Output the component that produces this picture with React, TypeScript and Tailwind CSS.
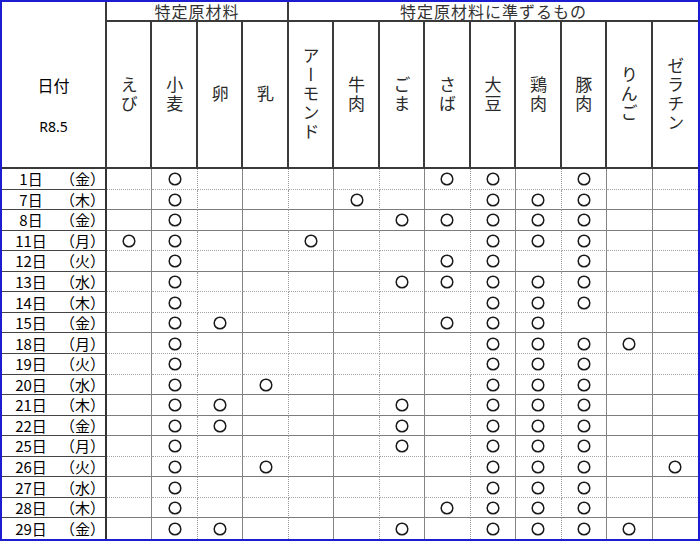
import React from 'react';

const allergens = ['えび', '小麦', '卵', '乳', 'アーモンド', '牛肉', 'ごま', 'さば', '大豆', '鶏肉', '豚肉', 'りんご', 'ゼラチン'];

interface Row {
    day: string;
    week: string;
    marks: string[];
}

const rows: Row[] = [
    { day: '1日', week: '金', marks: ['小麦', 'さば', '大豆', '豚肉'] },
    { day: '7日', week: '木', marks: ['小麦', '牛肉', '大豆', '鶏肉', '豚肉'] },
    { day: '8日', week: '金', marks: ['小麦', 'ごま', 'さば', '大豆', '鶏肉', '豚肉'] },
    { day: '11日', week: '月', marks: ['えび', '小麦', 'アーモンド', '大豆', '鶏肉', '豚肉'] },
    { day: '12日', week: '火', marks: ['小麦', 'さば', '大豆', '豚肉'] },
    { day: '13日', week: '水', marks: ['小麦', 'ごま', 'さば', '大豆', '鶏肉', '豚肉'] },
    { day: '14日', week: '木', marks: ['小麦', '大豆', '鶏肉', '豚肉'] },
    { day: '15日', week: '金', marks: ['小麦', '卵', 'さば', '大豆', '鶏肉'] },
    { day: '18日', week: '月', marks: ['小麦', '大豆', '鶏肉', '豚肉', 'りんご'] },
    { day: '19日', week: '火', marks: ['小麦', '大豆', '鶏肉', '豚肉'] },
    { day: '20日', week: '水', marks: ['小麦', '乳', '大豆', '鶏肉', '豚肉'] },
    { day: '21日', week: '木', marks: ['小麦', '卵', 'ごま', '大豆', '鶏肉', '豚肉'] },
    { day: '22日', week: '金', marks: ['小麦', '卵', 'ごま', '大豆', '鶏肉', '豚肉'] },
    { day: '25日', week: '月', marks: ['小麦', 'ごま', '大豆', '鶏肉', '豚肉'] },
    { day: '26日', week: '火', marks: ['小麦', '乳', '大豆', '鶏肉', '豚肉', 'ゼラチン'] },
    { day: '27日', week: '水', marks: ['小麦', '大豆', '鶏肉', '豚肉'] },
    { day: '28日', week: '木', marks: ['小麦', 'さば', '大豆', '鶏肉', '豚肉'] },
    { day: '29日', week: '金', marks: ['小麦', '卵', 'ごま', '大豆', '鶏肉', '豚肉', 'りんご'] },
];

// which column edges / row edges render solid in the scaled-down sheet
const solidCols = [0, 2, 4, 6, 8, 10, 11];
const solidRows = [1, 2, 4, 7, 10, 11, 12, 14, 16];

function Mark() {
    return (
        <svg width="14" height="14" viewBox="0 0 14 14" className="mt-[1px]">
            <circle cx="7" cy="7" r="5.8" fill="none" stroke="#1a1a1a" strokeWidth="1.5" />
        </svg>
    );
}

export default function App() {
    return (
        <div className="w-[700px] h-[541px] bg-white border-2 border-[#1c1cd0] font-['Noto_Sans_CJK_JP','Noto_Sans',sans-serif] text-[#1a1a1a]">
            <div className="grid h-full grid-cols-[105px_repeat(13,minmax(0,1fr))] grid-rows-[20px_147px_repeat(18,minmax(0,1fr))]">
                {/* header: date */}
                <div className="row-span-2 border-r-2 border-b-2 border-[#3a3a3a] flex flex-col items-center pt-[73px]">
                    <span className="text-[16px] leading-[20px] text-black">日付</span>
                    <span className="mt-[22px] text-[14px] leading-[20px] font-['Noto_Sans',sans-serif] text-black">R8.5</span>
                </div>

                {/* group headers */}
                <div className="col-span-4 border-r-2 border-b-2 border-[#3a3a3a] flex items-center justify-center text-[16px] leading-[18px] tracking-[1px] text-[#333]">
                    特定原材料
                </div>
                <div className="col-span-9 border-b-2 border-[#3a3a3a] flex items-center justify-center text-[16px] leading-[18px] tracking-[1px] text-[#333]">
                    特定原材料に準ずるもの
                </div>

                {/* allergen headers */}
                {allergens.map((name, i) => (
                    <div
                        key={name}
                        className={
                            i < allergens.length - 1
                                ? 'border-r-2 border-b-2 border-[#3a3a3a] flex items-center justify-center'
                                : 'border-b-2 border-[#3a3a3a] flex items-center justify-center'
                        }
                    >
                        <span className="[writing-mode:vertical-rl] [text-orientation:upright] text-[17px] leading-[20px] tracking-[2px] text-[#2a2a2a]">
                            {name}
                        </span>
                    </div>
                ))}

                {/* data rows */}
                {rows.map((row, r) => (
                    <React.Fragment key={row.day}>
                        <div
                            className={
                                r < rows.length - 1
                                    ? 'flex items-center border-r-2 border-r-[#333] border-b border-b-[#444] text-[15px] leading-none text-black'
                                    : 'flex items-center border-r-2 border-r-[#333] text-[15px] leading-none text-black'
                            }
                        >
                            <span className="w-[61px] text-center">{row.day}</span>
                            <span className="flex-1 text-center">（{row.week}）</span>
                        </div>
                        {allergens.map((name, c) => {
                            const right =
                                c === allergens.length - 1
                                    ? ''
                                    : solidCols.includes(c)
                                    ? 'border-r border-r-[#858585]'
                                    : 'border-r border-r-[#9c9c9c] [border-right-style:dotted]';
                            const bottom =
                                r === rows.length - 1
                                    ? ''
                                    : solidRows.includes(r)
                                    ? 'border-b border-b-[#7c7c7c]'
                                    : 'border-b border-b-[#a3a3a3] [border-bottom-style:dotted]';
                            return (
                                <div key={name} className={`flex items-center justify-center ${right} ${bottom}`}>
                                    {row.marks.includes(name) && <Mark />}
                                </div>
                            );
                        })}
                    </React.Fragment>
                ))}
            </div>
        </div>
    );
}
